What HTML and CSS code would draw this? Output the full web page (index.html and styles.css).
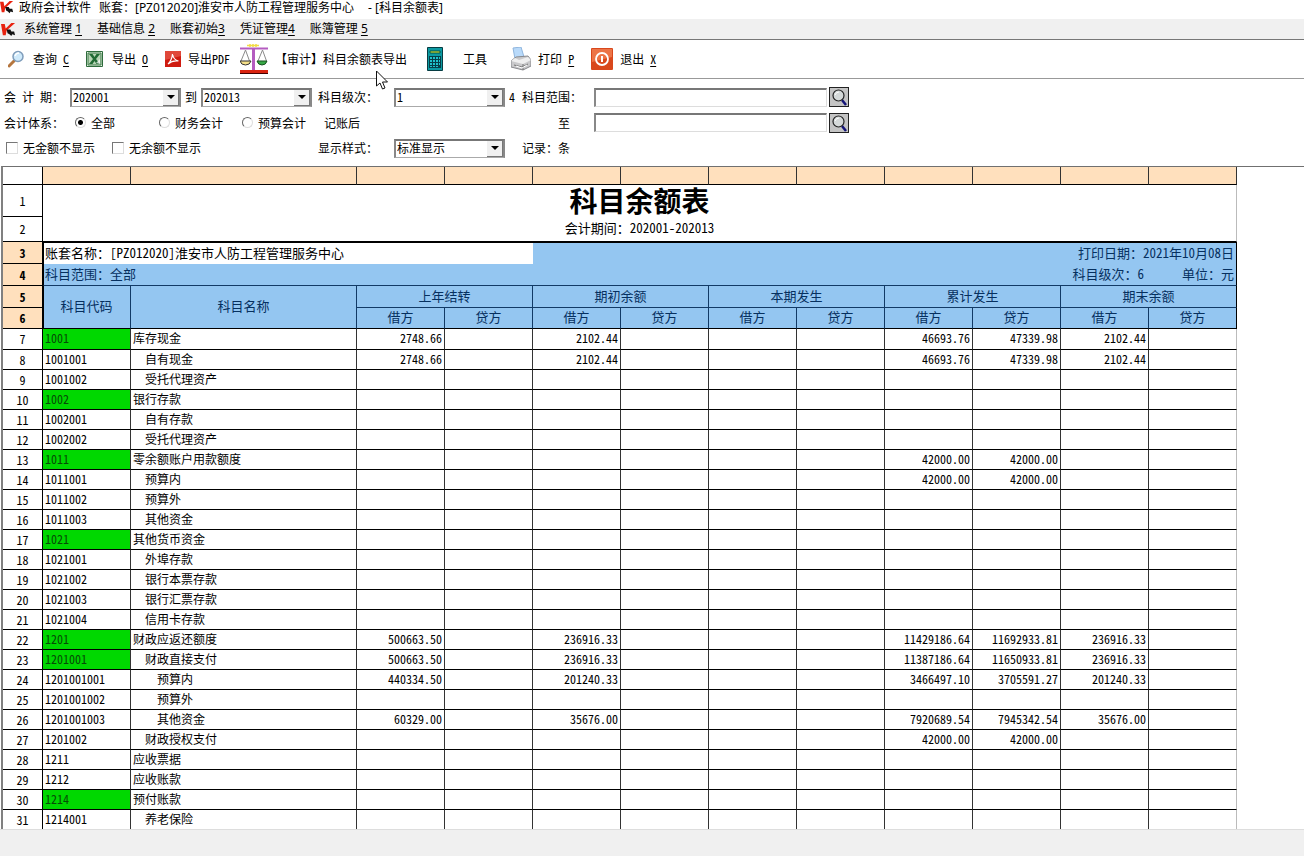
FILE: index.html
```html
<!DOCTYPE html>
<html lang="zh-CN">
<head>
<meta charset="utf-8">
<title>政府会计软件 - 科目余额表</title>
<link rel="stylesheet" href="styles.css">
</head>
<body>
<header class="titlebar">
  <svg class="logo" viewBox="0 0 16 16"><path d="M0 2h4l1 5 6-6h4L6 9l-1 5H2z" fill="#e8220f"/><path d="M6 8l4 0 1 2 3 0 1 4-3-1-1 2-2-2-2-1z" fill="#111"/></svg>
  <span>政府会计软件</span><span>账套：[PZ012020]淮安市人防工程管理服务中心</span><span class="doc">- [科目余额表]</span>
</header>
<nav class="menubar">
  <svg class="logo" viewBox="0 0 16 16"><path d="M0 2h4l1 5 6-6h4L6 9l-1 5H2z" fill="#e8220f"/><path d="M6 8l4 0 1 2 3 0 1 4-3-1-1 2-2-2-2-1z" fill="#111"/></svg>
  <button>系统管理 <u>1</u></button>
  <button>基础信息 <u>2</u></button>
  <button>账套初始<u>3</u></button>
  <button>凭证管理<u>4</u></button>
  <button>账簿管理 <u>5</u></button>
</nav>
<div class="toolbar">
  <button class="tool">
    <svg width="16" height="18" viewBox="0 0 16 18"><path d="M1 16l5-5" stroke="#b5763f" stroke-width="3" stroke-linecap="round"/><circle cx="10" cy="6.500" r="5" fill="#cfeafb" stroke="#7f9dbb" stroke-width="1.500"/><path d="M7 6q1-3 4-3" stroke="#fff" stroke-width="1.500" fill="none"/></svg>
    <span>查询 <u>C</u></span>
  </button>
  <button class="tool">
    <svg width="17" height="16" viewBox="0 0 17 16"><path d="M.5.5h16v15H.5z" fill="#e4f0e2" stroke="#2f6b3c"/><path d="M2 2h13v12H2z" fill="#b8d4b5" stroke="#3b7a47"/><path d="M3 3h3.500l2 3 2-3H14l-4 5 4 5h-3.500l-2-3-2 3H3l4-5z" fill="#226b35"/><path d="M10 12l4-4v5z" fill="#fff" opacity=".7"/></svg>
    <span>导出 <u>O</u></span>
  </button>
  <button class="tool tight near">
    <svg width="16" height="16" viewBox="0 0 16 16"><path d="M0 0h16v16H0z" fill="#cf1b10"/><path d="M0 0h16v5L0 9z" fill="#e0483a"/><path d="M3 13q4-4 4.500-10 1 6 6 7-6-1-10.500 3z" fill="none" stroke="#fff" stroke-width="1.200"/></svg>
    <span>导出PDF</span>
  </button>
  <button class="tool tight far">
    <svg width="28" height="30" viewBox="0 0 28 30"><path d="M7 1.500h12M10 0v3M13 0v3M16 0v3" stroke="#f2dc45" stroke-width="1.500"/><path d="M0 4.500h28" stroke="#b45cc0" stroke-width="2"/><path d="M13.500 4v22" stroke="#b45cc0" stroke-width="3"/><path d="M5.500 6L1 17M5.500 6l4 11M22.500 6L18 17M22.500 6l4 11" stroke="#8b8b8b" fill="none"/><path d="M0 17h11q-1 4-5.500 4T0 17z" fill="#f5e08a" stroke="#333"/><path d="M17 17h10q-1 4-5 4t-5-4z" fill="#36a846" stroke="#17521f"/><path d="M0 26h28v3H0z" fill="#d9230f"/><path d="M0 29h28v1H0z" fill="#400"/></svg>
    <span>【审计】科目余额表导出</span>
  </button>
  <button class="tool wide">
    <svg width="16" height="24" viewBox="0 0 16 24"><path d="M.5.5h15v23H.5z" fill="#0c9aa2" stroke="#063c42"/><path d="M3 4h10v2H3z" fill="#f4f12f" stroke="#054"/><path d="M2 9h12v12H2z" fill="#063f48"/><path d="M3 10h2v2H3zM6 10h2v2H6zM9 10h2v2H9zM12 10h1v2h-1zM3 13h2v2H3zM6 13h2v2H6zM9 13h2v2H9zM12 13h1v2h-1zM3 16h2v2H3zM6 16h2v2H6zM9 16h2v2H9zM12 16h1v2h-1zM3 19h2v1H3zM6 19h2v1H6zM9 19h2v1H9z" fill="#1fc3cc"/></svg>
    <span>工具</span>
  </button>
  <button class="tool tight">
    <svg width="20" height="24" viewBox="0 0 20 24"><path d="M2 1l8-1 3 10-9 2z" fill="#b9dafa" stroke="#8fb5dd"/><path d="M0 14l5-4 12-1 3 4v6l-8 4-12-3z" fill="#c9c9cb" stroke="#88898d"/><path d="M0 14l12 3 8-4-3-3-9 3-4-2z" fill="#efefef"/><path d="M3 18l8 2 6-3M12 17v6" stroke="#777" fill="none"/><path d="M5 19l6 2 5-3" stroke="#fff" fill="none"/></svg>
    <span>打印 <u>P</u></span>
  </button>
  <button class="tool tight">
    <svg width="22" height="22" viewBox="0 0 22 22"><rect width="22" height="22" rx="1" fill="#d9481c"/><path d="M1 1h20v8L1 14z" fill="#ec7447"/><circle cx="11" cy="11" r="6" fill="none" stroke="#fff" stroke-width="1.800"/><path d="M11 8v6" stroke="#fff" stroke-width="2"/></svg>
    <span>退出 <u>X</u></span>
  </button>
  <svg class="pointer" width="12" height="20" viewBox="0 0 12 20"><path d="M.5 1v15l3.500-3 2.500 6 2.500-1-2.500-6h5z" fill="#fff" stroke="#111"/></svg>
</div>
<form class="filters">
  <label for="from" class="spaced">会 计 期：</label>
  <div class="line">
    <span class="combo"><select id="from"><option>202001</option></select><i></i></span>
    <label for="to">到</label>
    <span class="combo"><select id="to"><option>202013</option></select><i></i></span>
  </div>
  <label for="level">科目级次：</label>
  <div class="line"><span class="combo"><select id="level"><option>1</option></select><i></i></span><span>4</span></div>
  <label for="r1">科目范围：</label>
  <div class="line range"><input type="text" id="r1"><button type="button" aria-label="查找起始科目"><svg width="18" height="18" viewBox="0 0 18 18"><path d="M12 12l4 5" stroke="#141478" stroke-width="2.500"/><circle cx="8.500" cy="7.500" r="5.500" fill="#d5d9d9" stroke="#222" stroke-width="1.200"/><path d="M5 7q1-3 4-3" stroke="#fff" fill="none"/></svg></button></div>

  <span>会计体系：</span>
  <div class="line radios">
    <label><input type="radio" name="sys" checked>全部</label>
    <label><input type="radio" name="sys">财务会计</label>
    <label><input type="radio" name="sys">预算会计</label>
  </div>
  <span class="posted">记账后</span>
  <span></span>
  <label for="r2" class="until">至</label>
  <div class="line range"><input type="text" id="r2"><button type="button" aria-label="查找结束科目"><svg width="18" height="18" viewBox="0 0 18 18"><path d="M12 12l4 5" stroke="#141478" stroke-width="2.500"/><circle cx="8.500" cy="7.500" r="5.500" fill="#d5d9d9" stroke="#222" stroke-width="1.200"/><path d="M5 7q1-3 4-3" stroke="#fff" fill="none"/></svg></button></div>

  <div class="line checks">
    <label><input type="checkbox">无金额不显示</label>
    <label><input type="checkbox">无余额不显示</label>
  </div>
  <label for="style">显示样式：</label>
  <div class="line"><span class="combo"><select id="style"><option>标准显示</option></select><i></i></span></div>
  <span>记录：条</span>
</form>
<main class="sheet">
<table>
<colgroup><col class="c-no"><col class="c-num"><col class="c-name"><col class="c-num" span="10"></colgroup>
<tbody class="top">
<tr class="cols"><th><td><td><td><td><td><td><td><td><td><td><td><td></tr>
<tr class="r1"><th>1<td colspan="12"><h1>科目余额表</h1></tr>
<tr class="r2"><th>2<td colspan="12">会计期间：202001-202013</tr>
</tbody>
<tbody class="sel">
<tr class="info first"><th>3<td colspan="4" class="active">账套名称：[PZ012020]淮安市人防工程管理服务中心<td colspan="8" class="end">打印日期：2021年10月08日</tr>
<tr class="info last"><th>4<td colspan="4">科目范围：全部<td colspan="8" class="end"><span class="lv">科目级次：6</span>单位：元</tr>
<tr class="heads"><th>5<td rowspan="2">科目代码<td rowspan="2">科目名称<td colspan="2">上年结转<td colspan="2">期初余额<td colspan="2">本期发生<td colspan="2">累计发生<td colspan="2">期末余额</tr>
<tr class="heads sub"><th>6<td>借方<td>贷方<td>借方<td>贷方<td>借方<td>贷方<td>借方<td>贷方<td>借方<td>贷方</tr>
</tbody>
<tbody class="data">
<tr class="lead"><th>7<td class="g">1001<td>库存现金<td>2748.66<td><td>2102.44<td><td><td><td>46693.76<td>47339.98<td>2102.44<td></tr>
<tr><th>8<td>1001001<td class="l1">自有现金<td>2748.66<td><td>2102.44<td><td><td><td>46693.76<td>47339.98<td>2102.44<td></tr>
<tr><th>9<td>1001002<td class="l1">受托代理资产<td><td><td><td><td><td><td><td><td><td></tr>
<tr><th>10<td class="g">1002<td>银行存款<td><td><td><td><td><td><td><td><td><td></tr>
<tr><th>11<td>1002001<td class="l1">自有存款<td><td><td><td><td><td><td><td><td><td></tr>
<tr><th>12<td>1002002<td class="l1">受托代理资产<td><td><td><td><td><td><td><td><td><td></tr>
<tr><th>13<td class="g">1011<td>零余额账户用款额度<td><td><td><td><td><td><td>42000.00<td>42000.00<td><td></tr>
<tr><th>14<td>1011001<td class="l1">预算内<td><td><td><td><td><td><td>42000.00<td>42000.00<td><td></tr>
<tr><th>15<td>1011002<td class="l1">预算外<td><td><td><td><td><td><td><td><td><td></tr>
<tr><th>16<td>1011003<td class="l1">其他资金<td><td><td><td><td><td><td><td><td><td></tr>
<tr><th>17<td class="g">1021<td>其他货币资金<td><td><td><td><td><td><td><td><td><td></tr>
<tr><th>18<td>1021001<td class="l1">外埠存款<td><td><td><td><td><td><td><td><td><td></tr>
<tr><th>19<td>1021002<td class="l1">银行本票存款<td><td><td><td><td><td><td><td><td><td></tr>
<tr><th>20<td>1021003<td class="l1">银行汇票存款<td><td><td><td><td><td><td><td><td><td></tr>
<tr><th>21<td>1021004<td class="l1">信用卡存款<td><td><td><td><td><td><td><td><td><td></tr>
<tr><th>22<td class="g">1201<td>财政应返还额度<td>500663.50<td><td>236916.33<td><td><td><td>11429186.64<td>11692933.81<td>236916.33<td></tr>
<tr><th>23<td class="g">1201001<td class="l1">财政直接支付<td>500663.50<td><td>236916.33<td><td><td><td>11387186.64<td>11650933.81<td>236916.33<td></tr>
<tr><th>24<td>1201001001<td class="l2">预算内<td>440334.50<td><td>201240.33<td><td><td><td>3466497.10<td>3705591.27<td>201240.33<td></tr>
<tr><th>25<td>1201001002<td class="l2">预算外<td><td><td><td><td><td><td><td><td><td></tr>
<tr><th>26<td>1201001003<td class="l2">其他资金<td>60329.00<td><td>35676.00<td><td><td><td>7920689.54<td>7945342.54<td>35676.00<td></tr>
<tr><th>27<td>1201002<td class="l1">财政授权支付<td><td><td><td><td><td><td>42000.00<td>42000.00<td><td></tr>
<tr><th>28<td>1211<td>应收票据<td><td><td><td><td><td><td><td><td><td></tr>
<tr><th>29<td>1212<td>应收账款<td><td><td><td><td><td><td><td><td><td></tr>
<tr><th>30<td class="g">1214<td>预付账款<td><td><td><td><td><td><td><td><td><td></tr>
<tr><th>31<td>1214001<td class="l1">养老保险<td><td><td><td><td><td><td><td><td><td></tr>
</tbody>
</table>
</main>
<footer class="status"></footer>
</body>
</html>
```
FILE: styles.css
```css
* { box-sizing: border-box; }
body {
  margin: 0;
  height: 100vh;
  display: flex;
  flex-direction: column;
  overflow: hidden;
  background: #fff;
  color: #000;
  font: 12px/16px "Noto Sans CJK SC", sans-serif;
  font-feature-settings: "hwid";
  white-space: nowrap;
}
button, input, select { font: inherit; font-feature-settings: inherit; color: inherit; }
button { border: 0; padding: 0; background: none; }
u { text-underline-offset: 2px; }

.titlebar, .menubar {
  flex: none;
  display: flex;
  font-family: "Noto Sans", "Noto Sans CJK SC", sans-serif;
  font-feature-settings: normal;
}
.titlebar { height: 19px; gap: 8px; overflow: hidden; }
.titlebar .logo { width: 14px; height: 14px; margin-right: -3px; }
.titlebar .doc { margin-left: 6px; }
.menubar {
  height: 21px;
  align-items: center;
  gap: 15px;
  padding-left: 1px;
  background: #f0f0f0;
  border-bottom: 1px solid #777;
}
.menubar .logo { width: 15px; height: 15px; margin-right: -7px; }

.toolbar {
  flex: none;
  position: relative;
  display: flex;
  align-items: center;
  height: 39px;
  padding-left: 8px;
  border-bottom: 1px solid #999;
}
.tool { display: flex; align-items: center; gap: 9px; margin-right: 17px; }
.tool.tight { gap: 7px; }
.tool.near { margin-right: 10px; }
.tool.far { margin-right: 20px; }
.tool.wide { gap: 20px; margin-right: 24px; }
.pointer { position: absolute; left: 376px; top: 30px; z-index: 1; }

.filters {
  flex: none;
  display: grid;
  grid-template-columns: 66px 248px 76px 128px 72px 1fr;
  grid-template-rows: 26px 25px 26px;
  align-items: center;
  padding: 5px 0 5px 4px;
}
.spaced { white-space: pre; }
.line { display: flex; align-items: center; gap: 4px; }
.combo { position: relative; display: flex; width: 111px; height: 19px; }
.combo select {
  width: 100%;
  appearance: none;
  padding: 0 20px 2px 1px;
  line-height: 14px;
  background: #fff;
  border: 1px solid #aaa;
  border-top: 2px solid #777;
  border-left: 2px solid #888;
  border-right: 2px solid #888;
  border-radius: 0;
}
.combo i {
  position: absolute;
  right: 2px;
  top: 2px;
  width: 16px;
  height: 16px;
  display: grid;
  place-items: center;
  background: #f0f0f0;
  border-right: 1px solid #777;
  border-bottom: 1px solid #777;
  pointer-events: none;
}
.combo i::after {
  content: "";
  border: 4px solid transparent;
  border-top-color: #000;
  border-bottom: 0;
}
.range { gap: 2px; }
.range input {
  width: 233px;
  height: 19px;
  padding: 0 2px;
  border: 1px solid #ddd;
  border-top: 2px solid #777;
  border-left: 2px solid #888;
}
.range button {
  width: 20px;
  height: 20px;
  display: grid;
  place-items: center;
  background: #c4c4c4;
  border: 1px solid #222;
}
.radios label, .checks label { display: flex; align-items: center; gap: 5px; }
.radios { padding-left: 5px; gap: 19px; }
.radios label:first-child { margin-right: 25px; }
.radios input {
  appearance: none;
  width: 11px;
  height: 11px;
  margin: 0;
  border: 1px solid #ddd;
  border-top-color: #666;
  border-left-color: #666;
  border-radius: 50%;
  background: #fff;
}
.radios input:checked { background: radial-gradient(circle, #000 2px, #fff 3px); }
.checks { grid-column: 1 / 3; padding-left: 2px; gap: 17px; }
.checks input {
  appearance: none;
  width: 12px;
  height: 12px;
  margin: 0;
  border: 1px solid #ddd;
  border-top-color: #777;
  border-left-color: #777;
  background: #fff;
}
.posted { padding-left: 6px; }
.until { padding-left: 36px; }

.sheet {
  flex: 1;
  min-height: 0;
  overflow: hidden;
  margin-left: 1px;
  border-left: 2px solid #808080;
  border-top: 1px solid #707070;
}
table { table-layout: fixed; width: 1234px; border-spacing: 0; }
.c-no { width: 40px; }
.c-num { width: 88px; }
.c-name { width: 226px; }
th, td {
  height: 20px;
  padding: 0 2px;
  line-height: 16px;
  border-right: 1px solid #333;
  border-bottom: 1px solid #000;
}
th { font-weight: 400; text-align: center; border-right-color: #000; }
td:last-child { border-right-color: #bbb; }
.cols th, .cols td { height: 18px; }
.cols td { background: #ffe0bd; border-right-color: #333; }
.r1 th, .r1 td { height: 32px; }
.r1 td { border-bottom: 0; padding-bottom: 2px; text-align: center; }
h1 { margin: 0; font-size: 28px; line-height: 28px; font-weight: 700; }
.r2 th, .r2 td { height: 25px; }
.r2 td { padding-bottom: 2px; font-size: 13px; text-align: center; }

.sel th { background: #ffe0bd; font-weight: 700; }
.sel th, .sel td { height: 22px; }
.sel td { padding-bottom: 2px; background: #94c6f1; color: #06305f; font-size: 13px; border-color: #123a66; }
.sel .info td { border-right: 0; border-bottom: 0; }
.sel .last td { border-bottom: 1px solid #123a66; }
.sel .info td:nth-child(2), .sel .heads td[rowspan]:nth-child(2) { border-left: 1px solid #000; padding-left: 1px; }
.sel .first td { border-top: 1px solid #000; }
.sel .active { background: #fff; color: #000; }
.sel .info .end { text-align: right; border-right: 1px solid #000; }
.lv { margin-right: 38px; }
.heads td { text-align: center; }
.heads td:last-child { border-right-color: #000; }
.sel .sub th, .sel .sub td { height: 21px; }
.sel .sub td, .sel td[rowspan] { border-bottom-color: #000; }

.lead th, .lead td { height: 21px; }
.data td { padding-bottom: 2px; }
.data td:nth-child(n+4) { text-align: right; }
.data .g { background: #00d800; color: #064d06; }
.data .l1 { padding-left: 14px; }
.data .l2 { padding-left: 26px; }
.status { flex: none; height: 27px; background: #f0f0f0; border-top: 1px solid #ddd; }
```
